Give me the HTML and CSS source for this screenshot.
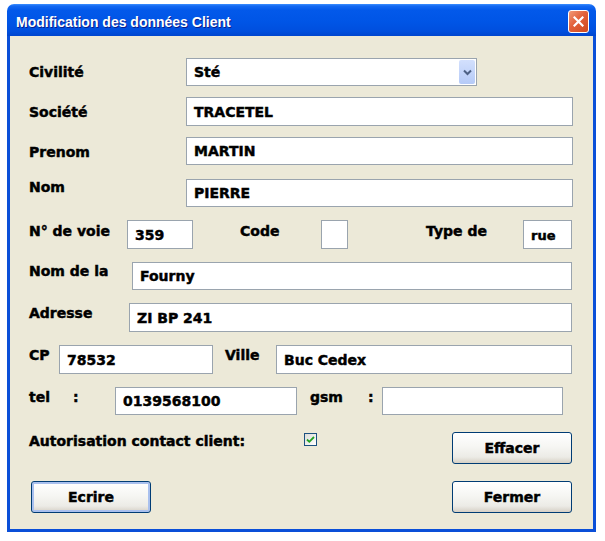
FILE: index.html
```html
<!DOCTYPE html>
<html lang="fr">
<head>
<meta charset="utf-8">
<title>Modification des données Client</title>
<link rel="stylesheet" href="styles.css">
</head>
<body>
<div class="window">
  <div class="titlebar">
    <span class="title">Modification des données Client</span>
    <span class="close">
      <svg width="11" height="11" viewBox="0 0 11 11"><path d="M1.5 1.5 L9.5 9.5 M9.5 1.5 L1.5 9.5" stroke="#fff" stroke-width="2.2" stroke-linecap="square"/></svg>
    </span>
  </div>
  <div class="body">
    <div class="form">
      <div class="row r1">
        <span class="lbl w157">Civilité</span>
        <div class="field select w291"><span class="val">Sté</span>
          <span class="drop"><svg width="9" height="7" viewBox="0 0 9 7"><path d="M1 1.5 L4.5 5 L8 1.5" fill="none" stroke="#4D6185" stroke-width="2"/></svg></span>
        </div>
      </div>
      <div class="row r2">
        <span class="lbl w157">Société</span>
        <div class="field w387"><span class="val">TRACETEL</span></div>
      </div>
      <div class="row r3">
        <span class="lbl w157">Prenom</span>
        <div class="field w387"><span class="val">MARTIN</span></div>
      </div>
      <div class="row r4">
        <span class="lbl w157">Nom</span>
        <div class="field w387"><span class="val">PIERRE</span></div>
      </div>
      <div class="row r5">
        <span class="lbl w98">N° de voie</span>
        <div class="field w66"><span class="val">359</span></div>
        <span class="lbl w81 ml47">Code</span>
        <div class="field w27"></div>
        <span class="lbl w97 ml78">Type de</span>
        <div class="field w49 small"><span class="val">rue</span></div>
      </div>
      <div class="row r6">
        <span class="lbl w103">Nom de la</span>
        <div class="field w440"><span class="val">Fourny</span></div>
      </div>
      <div class="row r7">
        <span class="lbl w100">Adresse</span>
        <div class="field w443"><span class="val">ZI BP 241</span></div>
      </div>
      <div class="row r8">
        <span class="lbl w30">CP</span>
        <div class="field w154"><span class="val">78532</span></div>
        <span class="lbl w51 ml12">Ville</span>
        <div class="field w296"><span class="val">Buc Cedex</span></div>
      </div>
      <div class="row r9">
        <span class="lbl w44">tel</span>
        <span class="lbl w42">:</span>
        <div class="field w182"><span class="val">0139568100</span></div>
        <span class="lbl w58 ml13">gsm</span>
        <span class="lbl w14">:</span>
        <div class="field w181"></div>
      </div>
      <div class="row r10">
        <span class="lbl w275">Autorisation contact client:</span>
        <span class="check">
          <svg width="9" height="9" viewBox="0 0 9 9"><path d="M1 4.5 L3.3 6.8 L8 2" fill="none" stroke="#21A121" stroke-width="1.8"/></svg>
        </span>
        <span class="btn ml135">Effacer</span>
      </div>
      <div class="row r11">
        <span class="btn default ml2">Ecrire</span>
        <span class="btn ml301">Fermer</span>
      </div>
    </div>
  </div>
</div>
</body>
</html>
```

FILE: styles.css
```css
html, body {
  margin: 0;
  padding: 0;
  background: #ffffff;
}
body {
  font-family: "DejaVu Sans", "Liberation Sans", sans-serif;
  font-weight: bold;
  font-size: 14px;
  color: #000;
}
.window {
  margin: 4px 0 0 7px;
  width: 589px;
}
.titlebar {
  height: 32px;
  box-sizing: border-box;
  border-radius: 7px 7px 0 0;
  background: linear-gradient(#3D8FFF 0, #1469F2 2px, #0359EA 6px, #0055E6 55%, #004FDE 85%, #0046CE 100%);
  display: flex;
  align-items: center;
  padding: 0 7px 0 9px;
}
.title {
  flex: 1;
  font-family: "Liberation Sans", Arial, sans-serif;
  font-size: 14px;
  font-weight: bold;
  color: #fff;
  text-shadow: 1px 1px 0 #0A1E8C;
  padding-top: 4px;
}
.close {
  width: 21px;
  height: 23px;
  box-sizing: border-box;
  margin-top: 3px;
  border: 1px solid #fff;
  border-radius: 3px;
  background: linear-gradient(135deg, #F29A78 0%, #E2613A 45%, #CF4A1E 100%);
  display: flex;
  align-items: center;
  justify-content: center;
}
.body {
  height: 496px;
  box-sizing: border-box;
  background: #ECE9D8;
  border: 3px solid #0A4FD8;
  border-top: none;
}
.form {
  display: flex;
  flex-direction: column;
  padding: 22px 0 0 19px;
  -webkit-text-stroke: 0.45px #000;
}
.row {
  display: flex;
  align-items: flex-start;
  height: 29px;
}
.r1 { height: 28px; }
.r2 { margin-top: 11px; }
.r3 { margin-top: 11px; height: 28px; }
.r4 { margin-top: 14px; height: 28px; }
.r5 { margin-top: 13px; }
.r6 { margin-top: 13px; height: 28px; }
.r7 { margin-top: 13px; }
.r8 { margin-top: 13px; }
.r9 { margin-top: 13px; height: 28px; }
.r10 { margin-top: 17px; height: 32px; }
.r11 { margin-top: 17px; height: 32px; }

.lbl {
  display: block;
  line-height: 16px;
  white-space: nowrap;
  flex: none;
}
.r1 .lbl { padding-top: 6px; }
.r2 .lbl, .r3 .lbl { padding-top: 7px; }
.r4 .lbl { padding-top: 0; }
.r5 .lbl { padding-top: 3px; }
.r6 .lbl { padding-top: 1px; }
.r7 .lbl, .r8 .lbl, .r9 .lbl { padding-top: 2px; }
.r10 .lbl { padding-top: 1px; }

.field {
  flex: none;
  height: 100%;
  box-sizing: border-box;
  background: #fff;
  border: 1px solid #9AA4AE;
  display: flex;
  align-items: center;
  padding-left: 7px;
  position: relative;
}
.field.small .val { font-size: 13px; padding-top: 2px; }
.val { white-space: nowrap; }
.select .drop {
  position: absolute;
  right: 1px;
  top: 1px;
  bottom: 1px;
  width: 16px;
  border-radius: 2px;
  background: linear-gradient(#D3E0FD, #B5CAF7);
  display: flex;
  align-items: center;
  justify-content: center;
}

.check {
  flex: none;
  width: 13px;
  height: 13px;
  box-sizing: border-box;
  margin-top: 1px;
  border: 1px solid #1C5180;
  background: linear-gradient(135deg, #DCDCD7, #FFFFFF);
  display: flex;
  align-items: center;
  justify-content: center;
}

.btn {
  flex: none;
  width: 120px;
  height: 32px;
  box-sizing: border-box;
  border: 1px solid #003C74;
  border-radius: 3px;
  background: linear-gradient(#FFFFFF 0%, #F6F6F3 45%, #ECEBE6 80%, #D6D0C5 100%);
  display: flex;
  align-items: center;
  justify-content: center;
}
.btn.default {
  box-shadow: inset 0 0 0 2px #A9C0EE;
}

.w14 { width: 14px; }
.w27 { width: 27px; }
.w30 { width: 30px; }
.w42 { width: 42px; }
.w44 { width: 44px; }
.w49 { width: 49px; }
.w51 { width: 51px; }
.w58 { width: 58px; }
.w66 { width: 66px; }
.w81 { width: 81px; }
.w97 { width: 97px; }
.w98 { width: 98px; }
.w100 { width: 100px; }
.w103 { width: 103px; }
.w154 { width: 154px; }
.w157 { width: 157px; }
.w181 { width: 181px; }
.w182 { width: 182px; }
.w275 { width: 275px; }
.w291 { width: 291px; }
.w296 { width: 296px; }
.w387 { width: 387px; }
.w440 { width: 440px; }
.w443 { width: 443px; }
.ml2 { margin-left: 2px; }
.ml12 { margin-left: 12px; }
.ml13 { margin-left: 13px; }
.ml47 { margin-left: 47px; }
.ml78 { margin-left: 78px; }
.ml135 { margin-left: 135px; }
.ml301 { margin-left: 301px; }
```
